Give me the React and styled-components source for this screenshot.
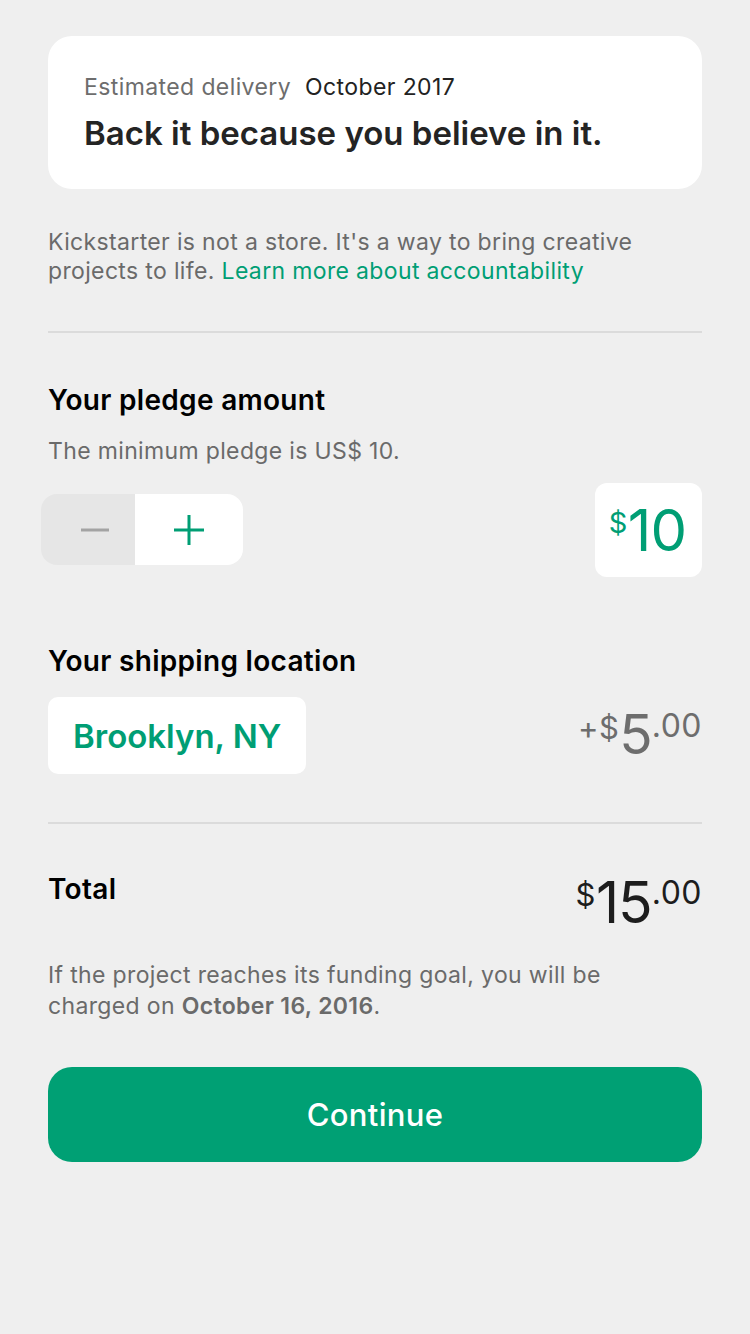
import React from 'react';
import styled, { createGlobalStyle } from 'styled-components';

const GREEN = '#009e74';

const Global = createGlobalStyle`
  html, body {
    margin: 0;
    padding: 0;
    background: #efefef;
  }
  body {
    font-family: Inter, Roboto, "Noto Sans", "Liberation Sans", sans-serif;
    -webkit-font-smoothing: antialiased;
  }
`;

const Page = styled.main`
  min-height: 1334px;
  padding: 36px 48px 0;
  box-sizing: border-box;
  background: #efefef;
`;

const InfoCard = styled.section`
  background: #fff;
  border-radius: 24px;
  padding: 36px 36px 37px;
`;

const DeliveryLine = styled.div`
  display: flex;
  gap: 14px;
  font-size: 23px;
  line-height: 30px;
  letter-spacing: 0.4px;
`;

const DeliveryLabel = styled.span`
  color: #6d6d6d;
`;

const DeliveryDate = styled.span`
  color: #222;
`;

const Headline = styled.h1`
  margin: 12px 0 0;
  font-size: 33px;
  line-height: 38px;
  font-weight: 600;
  color: #242424;
`;

const Note = styled.p`
  margin: ${p => p.$margin || '0'};
  width: ${p => p.$width || 'auto'};
  font-size: 23px;
  line-height: ${p => p.$lh || 29}px;
  letter-spacing: 0.35px;
  color: #6a6a6a;

  a {
    color: ${GREEN};
    text-decoration: none;
  }

  b {
    font-weight: 600;
  }
`;

const Divider = styled.hr`
  border: 0;
  border-top: 2px solid #dbdbdb;
  margin: ${p => p.$margin};
`;

const SectionTitle = styled.h2`
  margin: ${p => p.$margin || '0'};
  font-size: 28px;
  line-height: 34px;
  font-weight: 600;
  letter-spacing: 0.3px;
  color: #000;
`;

const Row = styled.div`
  display: flex;
  justify-content: space-between;
  align-items: ${p => p.$align || 'center'};
  margin: ${p => p.$margin || '0'};
`;

const Stepper = styled.div`
  display: flex;
  margin-left: -7px;
  border-radius: 16px;
  overflow: hidden;
  margin-top: 11px;
`;

const StepButton = styled.button`
  width: ${p => (p.$muted ? 94 : 108)}px;
  height: 71px;
  border: 0;
  padding: 0 0 0 ${p => (p.$muted ? 14 : 0)}px;
  display: flex;
  align-items: center;
  justify-content: center;
  background: ${p => (p.$muted ? '#e6e6e6' : '#fff')};
  cursor: pointer;
`;

const AmountBox = styled.div`
  background: #fff;
  border-radius: 12px;
  height: 94px;
  padding: 0 16px 0 14px;
  display: flex;
  align-items: center;
`;

const Money = styled.div`
  display: flex;
  align-items: flex-start;
  color: ${p => p.$color};
  font-weight: 400;
  margin-top: ${p => p.$top || 0}px;
`;

const Sup = styled.span`
  font-size: ${p => p.$size}px;
  line-height: 1;
  letter-spacing: 0.5px;
  margin-top: ${p => p.$top}px;
`;

const Big = styled.span`
  font-size: ${p => p.$size}px;
  line-height: 1;
  letter-spacing: -1px;
`;

const LocationButton = styled.button`
  background: #fff;
  border: 0;
  border-radius: 10px;
  height: 77px;
  padding: 0 25px;
  font-family: inherit;
  font-size: 33px;
  font-weight: 600;
  color: ${GREEN};
  cursor: pointer;
`;

const ContinueButton = styled.button`
  display: block;
  width: 100%;
  height: 95px;
  margin-top: 45px;
  border: 0;
  border-radius: 24px;
  background: #00a074;
  color: #fff;
  font-family: inherit;
  font-size: 31px;
  font-weight: 500;
  letter-spacing: 0.3px;
  cursor: pointer;
`;

const Minus = () => (
  <svg width="28" height="4" viewBox="0 0 28 4">
    <rect width="28" height="3" y="0.5" fill="#a3a3a3" />
  </svg>
);

const Plus = () => (
  <svg width="30" height="30" viewBox="0 0 30 30">
    <rect x="13.5" y="0" width="3" height="30" fill={GREEN} />
    <rect x="0" y="13.5" width="30" height="3" fill={GREEN} />
  </svg>
);

export default function App() {
  return (
    <>
      <Global />
      <Page>
        <InfoCard>
          <DeliveryLine>
            <DeliveryLabel>Estimated delivery</DeliveryLabel>
            <DeliveryDate>October 2017</DeliveryDate>
          </DeliveryLine>
          <Headline>Back it because you believe in it.</Headline>
        </InfoCard>

        <Note $margin="39px 0 0">
          Kickstarter is not a store. It's a way to bring creative projects to life.{' '}
          <a href="#accountability">Learn more about accountability</a>
        </Note>

        <Divider $margin="45px 0 50px" />

        <SectionTitle>Your pledge amount</SectionTitle>
        <Note $margin="19px 0 0" $lh={30}>The minimum pledge is US$ 10.</Note>

        <Row $margin="17px 0 0" $align="flex-start">
          <Stepper>
            <StepButton $muted aria-label="Decrease"><Minus /></StepButton>
            <StepButton aria-label="Increase"><Plus /></StepButton>
          </Stepper>
          <AmountBox>
            <Money $color={GREEN}>
              <Sup $size={29} $top={7}>$</Sup>
              <Big $size={58}>10</Big>
            </Money>
          </AmountBox>
        </Row>

        <SectionTitle $margin="67px 0 0">Your shipping location</SectionTitle>

        <Row $margin="19px 0 0" $align="flex-start">
          <LocationButton>Brooklyn, NY</LocationButton>
          <Money $color="#6d6d6d" $top={10}>
            <Sup $size={31} $top={5}>+$</Sup>
            <Big $size={55}>5</Big>
            <Sup $size={32} $top={3}>.00</Sup>
          </Money>
        </Row>

        <Divider $margin="48px 0 48px" />

        <Row $align="flex-start">
          <SectionTitle>Total</SectionTitle>
          <Money $color="#1d1d1d" $top={2}>
            <Sup $size={31} $top={5}>$</Sup>
            <Big $size={57}>15</Big>
            <Sup $size={32} $top={3}>.00</Sup>
          </Money>
        </Row>

        <Note $margin="29px 0 0" $width="600px" $lh={31}>
          If the project reaches its funding goal, you will be charged on <b>October 16, 2016</b>.
        </Note>

        <ContinueButton>Continue</ContinueButton>
      </Page>
    </>
  );
}
